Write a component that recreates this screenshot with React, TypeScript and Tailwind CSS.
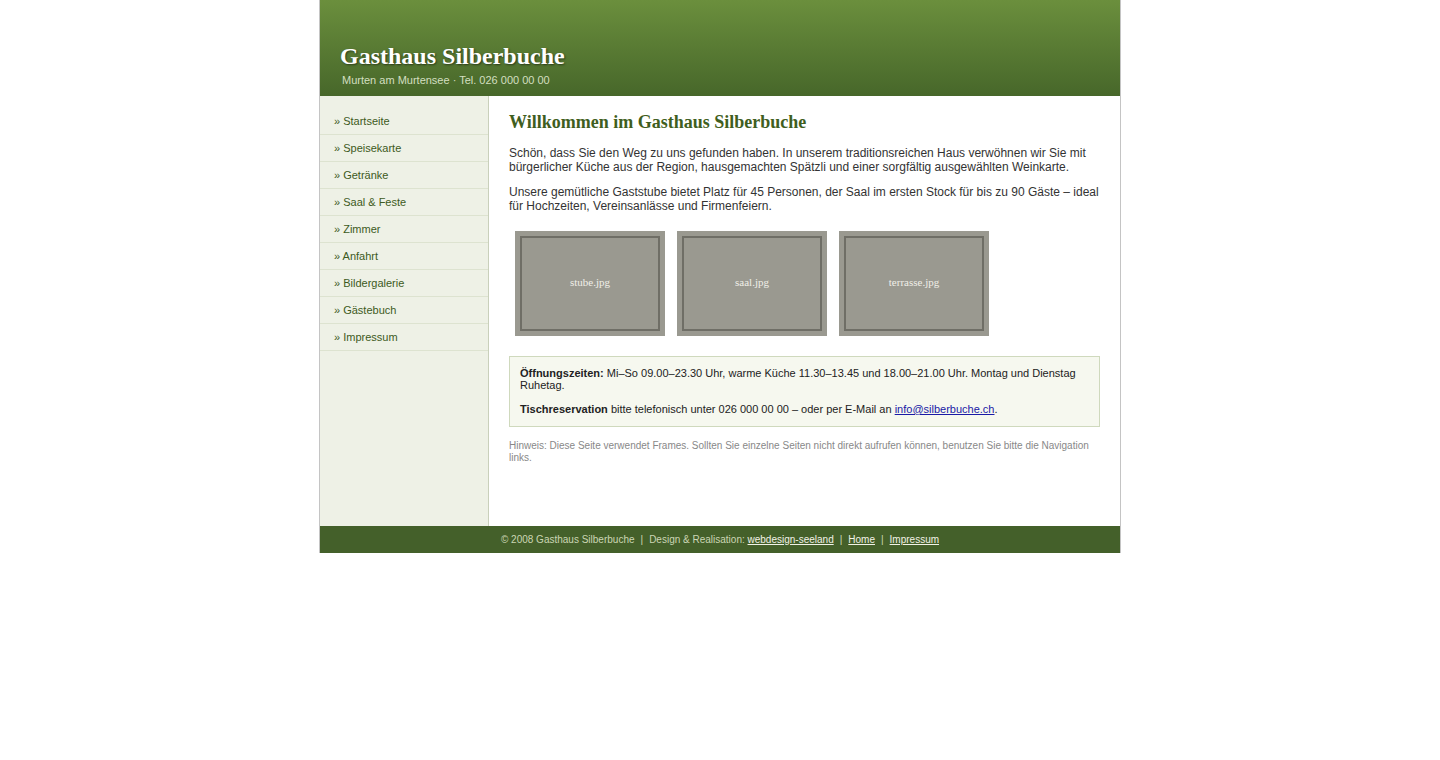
import React from "react";

const navItems = [
  "Startseite",
  "Speisekarte",
  "Getränke",
  "Saal & Feste",
  "Zimmer",
  "Anfahrt",
  "Bildergalerie",
  "Gästebuch",
  "Impressum",
];

const pictures = ["stube.jpg", "saal.jpg", "terrasse.jpg"];

const Photo = ({ name }: { name: string }) => (
  <div className="w-[150px] h-[105px] bg-[#9a9990] p-[5px]">
    <div className="w-full h-full border-2 border-[#6f6e66] flex items-center justify-center pb-[3px] text-[11px] text-[#f0efe8] font-['Liberation_Serif',serif]">
      {name}
    </div>
  </div>
);

export default function App() {
  return (
    <div className="min-h-[760px] bg-white font-['Liberation_Sans',Arial,sans-serif]">
      <div className="w-[802px] mx-auto border-x border-[#c4c4c4]">
        {/* header */}
        <div className="h-[96px] bg-gradient-to-b from-[#6b8f3d] to-[#47672a] px-5 pt-[41px]">
          <h1 className="text-[24px] leading-[30px] font-bold text-white font-['Liberation_Serif',serif] [text-shadow:1px_1px_2px_rgba(0,0,0,0.5)]">
            Gasthaus Silberbuche
          </h1>
          <div className="text-[11px] leading-[14px] text-[#d3dfc0] mt-[2px] ml-[2px]">
            Murten am Murtensee · Tel. 026 000 00 00
          </div>
        </div>

        <div className="flex min-h-[430px]">
          {/* navigation */}
          <div className="w-[169px] shrink-0 bg-[#eef1e6] border-r border-[#c9d0bb] pt-3">
            {navItems.map((item) => (
              <a
                key={item}
                href="#"
                className="block h-[27px] leading-[26px] pl-[14px] border-b border-[#dde3d0] text-[11px] text-[#3d5a22]"
              >
                » {item}
              </a>
            ))}
          </div>

          {/* content */}
          <div className="flex-1 px-5 pt-[14px] pb-6 text-[12px] leading-[14px] text-[#333]">
            <h2 className="text-[18px] leading-[24px] font-bold text-[#3f5e20] font-['Liberation_Serif',serif] mb-[12px]">
              Willkommen im Gasthaus Silberbuche
            </h2>
            <p className="mb-[11px]">
              Schön, dass Sie den Weg zu uns gefunden haben. In unserem traditionsreichen Haus verwöhnen wir Sie mit
              bürgerlicher Küche aus der Region, hausgemachten Spätzli und einer sorgfältig ausgewählten Weinkarte.
            </p>
            <p>
              Unsere gemütliche Gaststube bietet Platz für 45 Personen, der Saal im ersten Stock für bis zu 90 Gäste – ideal
              für Hochzeiten, Vereinsanlässe und Firmenfeiern.
            </p>

            <div className="flex gap-3 mt-[18px] ml-[6px]">
              {pictures.map((p) => (
                <Photo key={p} name={p} />
              ))}
            </div>

            <div className="mt-5 border border-[#cfd9bd] bg-[#f6f8ef] px-[10px] pt-[10px] pb-[11px] text-[11px] leading-[12px] text-[#222]">
              <p>
                <b>Öffnungszeiten:</b> Mi–So 09.00–23.30 Uhr, warme Küche 11.30–13.45 und 18.00–21.00 Uhr. Montag und Dienstag
                Ruhetag.
              </p>
              <p className="mt-3">
                <b>Tischreservation</b> bitte telefonisch unter 026 000 00 00 – oder per E-Mail an{" "}
                <a href="#" className="text-[#1a1aa6] underline">
                  info@silberbuche.ch
                </a>
                .
              </p>
            </div>

            <p className="mt-[13px] text-[10px] leading-[12px] text-[#888]">
              Hinweis: Diese Seite verwendet Frames. Sollten Sie einzelne Seiten nicht direkt aufrufen können, benutzen Sie bitte die Navigation
              links.
            </p>
          </div>
        </div>

        {/* footer */}
        <div className="h-[27px] bg-[#44602a] flex items-center justify-center text-[10px] text-[#cbd6b4]">
          <span>© 2008 Gasthaus Silberbuche</span>
          <span className="mx-[6px]">|</span>
          <span>
            Design &amp; Realisation:{" "}
            <a href="#" className="underline text-[#f2f2e6]">
              webdesign-seeland
            </a>
          </span>
          <span className="mx-[6px]">|</span>
          <a href="#" className="underline text-[#f2f2e6]">
            Home
          </a>
          <span className="mx-[6px]">|</span>
          <a href="#" className="underline text-[#f2f2e6]">
            Impressum
          </a>
        </div>
      </div>
    </div>
  );
}
